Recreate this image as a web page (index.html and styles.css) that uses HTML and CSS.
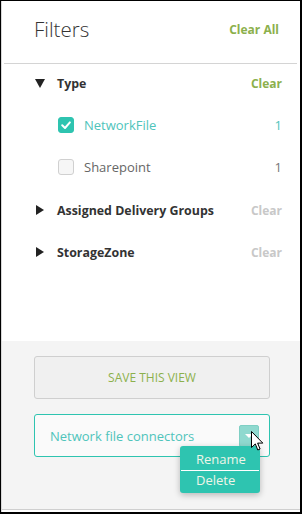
FILE: index.html
```html
<!DOCTYPE html>
<html lang="en">
<head>
  <meta charset="UTF-8">
  <title>Filters</title>
  <link rel="stylesheet" href="styles.css">
</head>
<body>
  <div class="frame">
    <div class="panel">
      <div class="filters">
        <div class="header">
          <h1 class="title">Filters</h1>
          <a class="clear-all">Clear All</a>
        </div>

        <div class="group-row type-row">
          <span class="caret caret-open"></span>
          <span class="group-name">Type</span>
          <a class="clear">Clear</a>
        </div>
        <div class="item-row checked">
          <span class="checkbox">
            <svg viewBox="0 0 16 16" width="16" height="16"><path d="M4.2 8.3 L7 11 L11.9 5.4" fill="none" stroke="#fff" stroke-width="2" stroke-linecap="round" stroke-linejoin="round"/></svg>
          </span>
          <span class="item-name">NetworkFile</span>
          <span class="count">1</span>
        </div>
        <div class="item-row last-item">
          <span class="checkbox"></span>
          <span class="item-name">Sharepoint</span>
          <span class="count">1</span>
        </div>

        <div class="group-row">
          <span class="caret caret-closed"></span>
          <span class="group-name">Assigned Delivery Groups</span>
          <a class="clear disabled">Clear</a>
        </div>
        <div class="group-row">
          <span class="caret caret-closed"></span>
          <span class="group-name">StorageZone</span>
          <a class="clear disabled">Clear</a>
        </div>
      </div>

      <div class="footer">
        <button class="save-view">SAVE THIS VIEW</button>
        <div class="saved-view">
          <span class="view-name">Network file connectors</span>
          <span class="toggle"><span class="toggle-arrow"></span></span>
          <ul class="menu">
            <li>Rename</li>
            <li>Delete</li>
          </ul>
          <svg class="cursor" viewBox="0 0 13 21" width="13" height="21">
            <path d="M0.5 0.5 L0.5 16.5 L4.3 12.9 L6.8 19 L9.1 18 L6.6 12.1 L11.8 12.1 Z" fill="#fff" stroke="#000" stroke-width="1"/>
          </svg>
        </div>
      </div>
    </div>
  </div>
</body>
</html>
```

FILE: styles.css
```css
* {
  box-sizing: border-box;
}

body {
  margin: 0;
  font-family: 'Open Sans', 'Noto Sans', sans-serif;
  background: #fff;
}

.frame {
  width: 302px;
  height: 514px;
  border: 1px solid #000;
  border-right-width: 2px;
  border-bottom-width: 2px;
  background: #fff;
}

.panel {
  height: 100%;
  display: flex;
  flex-direction: column;
  border-left: 1px solid #d8d8d8;
}

.filters {
  flex: 1;
}

.header {
  height: 63px;
  padding: 0 18px 6px 30px;
  margin: 0 3px 0 2px;
  display: flex;
  align-items: center;
  justify-content: space-between;
  border-bottom: 1px solid #d4d4d4;
}

.title {
  margin: 0;
  font-size: 20.5px;
  font-weight: 300;
  color: #333;
}

.clear-all {
  font-size: 12px;
  font-weight: 700;
  color: #8cb04c;
}

.group-row,
.item-row {
  display: flex;
  align-items: center;
  padding: 0 18px 0 33px;
}

.group-row {
  height: 42px;
}

.type-row {
  height: 37px;
  margin: 1px 0 2px;
}

.item-row {
  height: 42px;
  padding-left: 56px;
}

.last-item {
  margin-bottom: 1px;
}

.caret {
  width: 10px;
  height: 10px;
  margin-right: 12px;
}

.caret-open {
  border-left: 5px solid transparent;
  border-right: 5px solid transparent;
  border-top: 9px solid #222;
  border-bottom: 0;
  height: 9px;
}

.caret-closed {
  border-top: 5px solid transparent;
  border-bottom: 5px solid transparent;
  border-left: 8px solid #222;
  width: 8px;
  margin-left: 1px;
  margin-right: 13px;
}

.group-name {
  flex: 1;
  font-size: 12.4px;
  font-weight: 700;
  color: #333;
}

.clear {
  font-size: 12px;
  font-weight: 700;
  color: #8cb04c;
}

.clear.disabled {
  color: #c8c8c8;
}

.checkbox {
  width: 16px;
  height: 16px;
  border: 1px solid #d0d0d0;
  border-radius: 3px;
  background: #f6f6f6;
  margin-right: 10px;
  display: flex;
}

.checked .checkbox {
  border-color: #2ec4b0;
  background: #2ec4b0;
}

.checkbox svg {
  margin: -1px;
}

.item-name {
  flex: 1;
  font-size: 13px;
  color: #666;
}

.count {
  font-size: 13px;
  color: #777;
}

.checked .item-name,
.checked .count {
  color: #4fc4bb;
}

.footer {
  height: 169px;
  background: #f4f4f4;
  border-bottom: 1px solid #cfcfcf;
  padding: 15px 30px 0 32px;
  margin-bottom: 2px;
}

.save-view {
  display: block;
  width: 236px;
  height: 43px;
  border: 1px solid #cfcfcf;
  border-radius: 3px;
  background: #f0f0f0;
  font-family: inherit;
  font-size: 12px;
  color: #8cb04c;
}

.saved-view {
  position: relative;
  margin-top: 15px;
  width: 236px;
  height: 43px;
  border: 1px solid #2ec4b0;
  border-radius: 3px;
  background: #fafafa;
  display: flex;
  align-items: center;
  padding-left: 15px;
}

.view-name {
  font-size: 13px;
  color: #4fc4bb;
}

.toggle {
  position: absolute;
  left: 204px;
  top: 10px;
  width: 20px;
  height: 22px;
  border-radius: 2px;
  background: #8fd9cf;
  border: 1px solid #7fcfc4;
  display: flex;
  justify-content: center;
  padding-top: 8px;
}

.toggle-arrow {
  width: 0;
  height: 0;
  border-left: 4px solid transparent;
  border-right: 4px solid transparent;
  border-top: 4px solid #fff;
}

.menu {
  position: absolute;
  left: 145px;
  top: 31px;
  width: 80px;
  margin: 0;
  padding: 3px 1px 1px;
  list-style: none;
  background: #2ec4b0;
  border-radius: 3px;
  box-shadow: 0 2px 6px rgba(0, 0, 0, 0.25);
}

.menu li {
  font-size: 13px;
  color: #f0f5e8;
  padding: 0 0 0 15px;
  height: 21px;
  line-height: 21px;
}

.menu li + li {
  border-top: 1px solid #fff;
  height: 22px;
  line-height: 19px;
}

.cursor {
  position: absolute;
  left: 216px;
  top: 16px;
}
```
